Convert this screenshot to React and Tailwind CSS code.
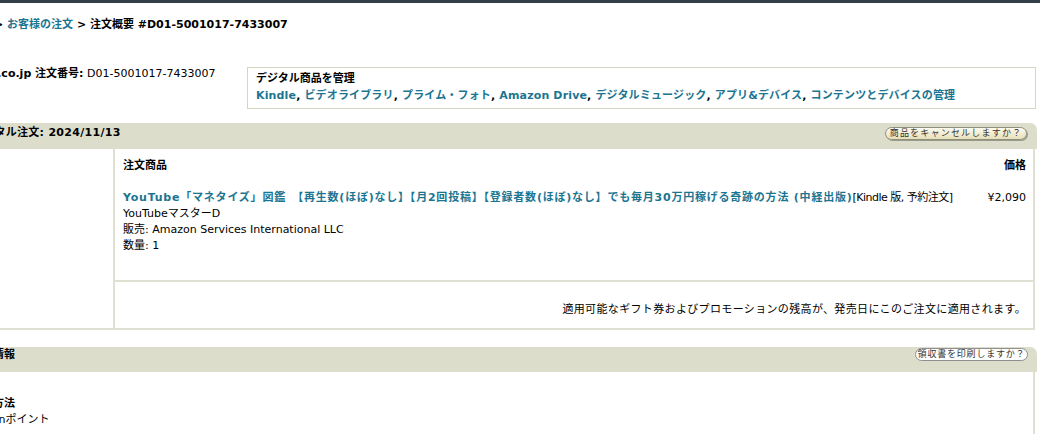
export default function App() {
  const link = "text-[#1b7591] font-bold";
  const line = "border-[#dfdfd2]";
  return (
    <div className="w-[1040px] h-[434px] overflow-hidden bg-white text-black text-[11px] leading-[16px] font-['DejaVu_Sans','Noto_Sans_CJK_JP',sans-serif]">
      <div className="h-[3px] bg-[#333e48]" />

      {/* breadcrumb */}
      <div className="mt-[14px] whitespace-nowrap font-bold">
        <span className="-ml-[6px]">&gt;</span>{" "}
        <a className="text-[#1b7591]">お客様の注文</a> &gt; 注文概要 #D01-5001017-7433007
      </div>

      {/* order number + digital box */}
      <div className="mt-[33px] flex items-start">
        <div className="w-[247px] shrink-0 whitespace-nowrap">
          <div className="-ml-[52px]">
            <b>Amazon.co.jp 注文番号:</b> D01-5001017-7433007
          </div>
        </div>
        <div className="mt-px mr-[4px] flex-1 h-[42px] border border-[#d6d6c0] pl-[8px] pt-[2px] leading-[17px] whitespace-nowrap font-bold">
          <div>デジタル商品を管理</div>
          <div className="tracking-[0.15px]">
            <a className={link}>Kindle</a>, <a className={link}>ビデオライブラリ</a>,{" "}
            <a className={link}>プライム・フォト</a>, <a className={link}>Amazon Drive</a>,{" "}
            <a className={link}>デジタルミュージック</a>, <a className={link}>アプリ&amp;デバイス</a>,{" "}
            <a className={link}>コンテンツとデバイスの管理</a>
          </div>
        </div>
      </div>

      {/* order header bar */}
      <div className="mt-[14px] mr-[3px] h-[26px] bg-[#ddddcc] rounded-tr-[7px] flex justify-between items-start">
        <div className="pt-[2px] font-bold whitespace-nowrap -ml-[28px] tracking-[0.3px]">デジタル注文: 2024/11/13</div>
        <button className="mt-[4px] mr-[10px] h-[13px] w-[142px] rounded-full border border-[#8f8f80] bg-gradient-to-b from-[#fdfbee] to-[#e6dfb8] shadow-[1px_1px_0_#9a9a88] text-[9px] leading-[11px] tracking-[1.2px] text-[#333] text-center whitespace-nowrap">
          商品をキャンセルしますか？
        </button>
      </div>

      {/* order content */}
      <div className={`mr-[5px] flex border-r-2 border-b-2 ${line}`}>
        <div className={`w-[115px] shrink-0 border-r-2 ${line}`} />
        <div className="flex-1 min-w-0">
          <div className={`h-[133px] border-b-2 ${line} pt-[9px] pl-[8px] pr-[7px]`}>
            <div className="flex justify-between font-bold">
              <span>注文商品</span>
              <span>価格</span>
            </div>
            <div className="mt-[16px] flex justify-between">
              <div className="whitespace-nowrap">
                <div>
                  <a className={`${link} tracking-[0.78px]`}>
                    YouTube「マネタイズ」図鑑　【再生数(ほぼ)なし】【月2回投稿】【登録者数(ほぼ)なし】でも毎月30万円稼げる奇跡の方法 (中経出版)
                  </a>
                  <span className="tracking-[-0.5px]">[Kindle 版, 予約注文]</span>
                </div>
                <div>YouTubeマスターD</div>
                <div>販売: Amazon Services International LLC</div>
                <div>数量: 1</div>
              </div>
              <div className="whitespace-nowrap">¥2,090</div>
            </div>
          </div>
          <div className="h-[46px] pt-[20px] pr-[7px] text-right whitespace-nowrap tracking-[0.35px]">
            適用可能なギフト券およびプロモーションの残高が、発売日にこのご注文に適用されます。
          </div>
        </div>
      </div>

      {/* payment header bar */}
      <div className="mt-[17px] mr-[3px] h-[25px] bg-[#ddddcc] rounded-tr-[7px] flex justify-between items-start">
        <div className="font-bold whitespace-nowrap -ml-[40px]">支払い情報</div>
        <button className="mt-[1px] mr-[9px] h-[13px] w-[113px] rounded-full border border-[#8f8f8f] bg-white text-[9px] leading-[11px] tracking-[0.8px] text-[#333] text-center whitespace-nowrap">
          領収書を印刷しますか？
        </button>
      </div>

      {/* payment content */}
      <div className={`mr-[5px] h-[100px] border-r-2 ${line} pt-[24px] whitespace-nowrap`}>
        <div className="-ml-[51px] font-bold">お支払い方法</div>
        <div className="-ml-[39px]">Amazonポイント</div>
      </div>
    </div>
  );
}
